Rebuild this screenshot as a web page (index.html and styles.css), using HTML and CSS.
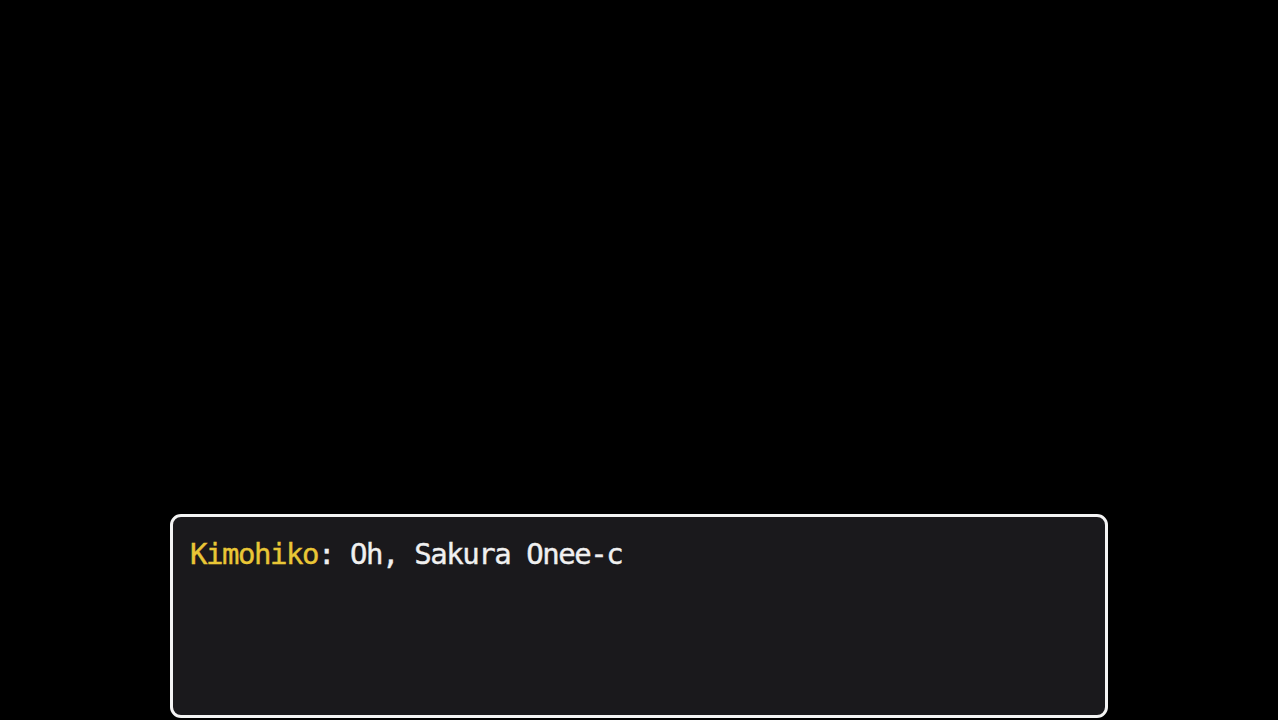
FILE: index.html
```html
<!DOCTYPE html>
<html lang="en">
<head>
    <meta charset="UTF-8">
    <meta name="viewport" content="width=device-width, initial-scale=1.0">
    <title>Message</title>
    <link rel="stylesheet" href="styles.css">
</head>
<body>
    <div class="scene">
        <div class="message-box">
            <p class="line"><span class="speaker">Kimohiko</span>: Oh, Sakura Onee-c</p>
        </div>
    </div>
</body>
</html>
```

FILE: styles.css
```css
* {
    margin: 0;
    padding: 0;
    box-sizing: border-box;
}

body {
    background: #000;
    height: 720px;
    overflow: hidden;
}

.scene {
    height: 100%;
    display: flex;
    flex-direction: column;
    justify-content: flex-end;
    align-items: center;
    padding-bottom: 2px;
}

.message-box {
    width: 938px;
    height: 204px;
    background: #1a191c;
    border: 3px solid #f4f4f4;
    border-radius: 11px;
    padding: 19px 17px;
}

.line {
    font-family: "DejaVu Sans Mono", monospace;
    font-size: 29px;
    letter-spacing: -1.45px;
    line-height: 36px;
    color: #f0f0f0;
    -webkit-text-stroke: 0.4px currentColor;
}

.speaker {
    color: #e9c636;
}
```
